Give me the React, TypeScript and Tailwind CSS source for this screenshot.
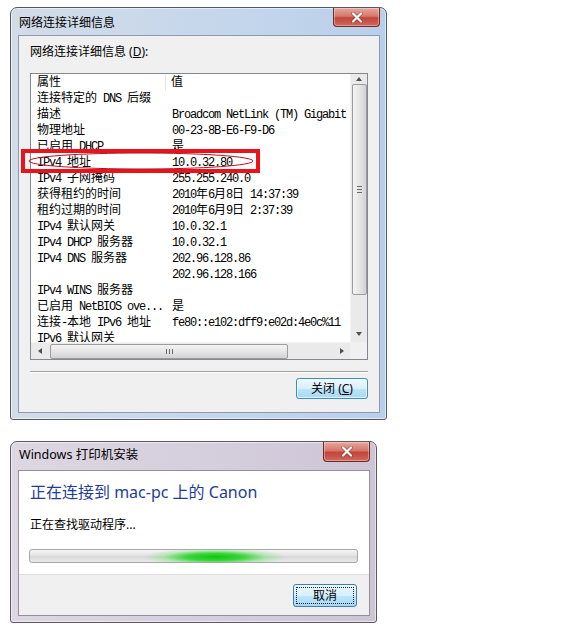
import React from "react";

const rows: [string, string][] = [
  ["连接特定的 DNS 后缀", ""],
  ["描述", "Broadcom NetLink (TM) Gigabit"],
  ["物理地址", "00-23-8B-E6-F9-D6"],
  ["已启用 DHCP", "是"],
  ["IPv4 地址", "10.0.32.80"],
  ["IPv4 子网掩码", "255.255.240.0"],
  ["获得租约的时间", "2010年6月8日 14:37:39"],
  ["租约过期的时间", "2010年6月9日 2:37:39"],
  ["IPv4 默认网关", "10.0.32.1"],
  ["IPv4 DHCP 服务器", "10.0.32.1"],
  ["IPv4 DNS 服务器", "202.96.128.86"],
  ["", "202.96.128.166"],
  ["IPv4 WINS 服务器", ""],
  ["已启用 NetBIOS ove...", "是"],
  ["连接-本地 IPv6 地址", "fe80::e102:dff9:e02d:4e0c%11"],
  ["IPv6 默认网关", ""],
];

function Mixed({ text }: { text: string }) {
  const parts = text.split(/([\x20-\x7e]+)/).filter((p) => p.length > 0);
  return (
    <>
      {parts.map((p, i) =>
        /^[\x20-\x7e]+$/.test(p) ? (
          <span
            key={i}
            className="font-['Liberation_Mono',monospace] text-[12px] tracking-[-1.2px] whitespace-pre"
          >
            {p}
          </span>
        ) : (
          <span key={i}>{p}</span>
        )
      )}
    </>
  );
}

function CloseBtn({ w, h }: { w: string; h: string }) {
  return (
    <div
      className={`${w} ${h} rounded-b-[4px] border border-t-0 border-[#6e2a25] bg-[linear-gradient(to_bottom,#e9a79d_0%,#d7776b_45%,#c2453a_55%,#d0685c_100%)] flex items-center justify-center shadow-[inset_0_0_0_1px_rgba(255,255,255,0.35)]`}
    >
      <svg width="14" height="11" viewBox="0 0 14 11">
        <path d="M3 1.5 L11 9.5 M11 1.5 L3 9.5" stroke="#5b1d18" strokeWidth="3.6" strokeLinecap="round" opacity="0.45" />
        <path d="M3 1.5 L11 9.5 M11 1.5 L3 9.5" stroke="#ffffff" strokeWidth="2.2" strokeLinecap="round" />
      </svg>
    </div>
  );
}

function UpArrow() {
  return <div className="w-0 h-0 border-x-[3.5px] border-x-transparent border-b-[4px] border-b-[#505050]" />;
}
function DownArrow() {
  return <div className="w-0 h-0 border-x-[3.5px] border-x-transparent border-t-[4px] border-t-[#505050]" />;
}
function LeftArrow() {
  return <div className="w-0 h-0 border-y-[3.5px] border-y-transparent border-r-[4px] border-r-[#505050]" />;
}
function RightArrow() {
  return <div className="w-0 h-0 border-y-[3.5px] border-y-transparent border-l-[4px] border-l-[#505050]" />;
}

function NetworkDialog() {
  return (
    <div className="w-[377px] h-[413px] border border-[#4f5a68] rounded-t-[7px] rounded-b-[3px] bg-[linear-gradient(to_right,#d3dce7,#c4d6ec_60%,#b9cfe9)] shadow-[inset_0_0_0_1px_rgba(255,255,255,0.55)] flex flex-col">
      <div className="h-[27px] flex items-start justify-between pl-[8px] pr-[6px]">
        <div className="pt-[7px] text-[12px] leading-[16px] text-black">网络连接详细信息</div>
        <CloseBtn w="w-[47px]" h="h-[19px]" />
      </div>
      <div className="ml-[7px] w-[362px] h-[378px] border border-[#8a9cb4] bg-[#f0f0f0] flex flex-col px-[11px]">
        <div className="pt-[8px] text-[12px] leading-[16px] text-black">
          网络连接详细信息 (<span className="underline">D</span>):
        </div>
        <div className="relative mt-[13px] w-[338px] h-[287px] shrink-0">
          <div className="w-full h-full border border-[#828790] bg-white flex flex-col">
            <div className="flex h-[268px]">
              <div className="w-[319px] h-full overflow-hidden flex flex-col">
                <div className="h-[16px] shrink-0 flex text-[12px] leading-[16px] text-black">
                  <div className="w-[135px] pl-[6px] border-r border-[#e3e6ea]">属性</div>
                  <div className="pl-[5px]">值</div>
                </div>
                {rows.map(([k, v], i) => (
                  <div key={i} className="h-[16px] shrink-0 flex text-[12px] leading-[16px] text-black whitespace-nowrap">
                    <div className="w-[135px] shrink-0 pl-[6px]">
                      <Mixed text={k} />
                    </div>
                    <div className="pl-[6px]">
                      <Mixed text={v} />
                    </div>
                  </div>
                ))}
              </div>
              <div className="w-[17px] h-full bg-[#eaeaea] border-l border-[#f4f4f4] flex flex-col items-center">
                <div className="h-[10px] flex items-center justify-center">
                  <UpArrow />
                </div>
                <div className="w-[15px] h-[211px] rounded-[2px] border border-[#9c9c9c] bg-[linear-gradient(to_right,#f4f4f4,#e6e6e6_50%,#d2d2d2)] flex flex-col items-center justify-center gap-[2px]">
                  <div className="w-[5px] h-px bg-[#6a6a6a]" />
                  <div className="w-[5px] h-px bg-[#6a6a6a]" />
                  <div className="w-[5px] h-px bg-[#6a6a6a]" />
                </div>
                <div className="flex-1" />
                <div className="h-[17px] flex items-center justify-center">
                  <DownArrow />
                </div>
              </div>
            </div>
            <div className="flex h-[17px]">
              <div className="w-[319px] h-full bg-[#eaeaea] border-t border-[#f4f4f4] flex items-center">
                <div className="w-[17px] flex items-center justify-center">
                  <LeftArrow />
                </div>
                <div className="ml-[2px] w-[238px] h-[15px] rounded-[2px] border border-[#9c9c9c] bg-[linear-gradient(to_bottom,#f4f4f4,#e6e6e6_50%,#d2d2d2)] flex items-center justify-center gap-[2px]">
                  <div className="w-px h-[5px] bg-[#6a6a6a]" />
                  <div className="w-px h-[5px] bg-[#6a6a6a]" />
                  <div className="w-px h-[5px] bg-[#6a6a6a]" />
                </div>
                <div className="flex-1" />
                <div className="w-[17px] flex items-center justify-center">
                  <RightArrow />
                </div>
              </div>
              <div className="w-[17px] h-full bg-[#f0f0f0]" />
            </div>
          </div>
          <div className="absolute left-[-9px] top-[76px] w-[239px] h-[24px] border-[4px] border-[#e8141c]" />
          <svg className="absolute left-[-3px] top-[77px]" width="228" height="21" viewBox="0 0 228 21">
            <ellipse cx="114" cy="11" rx="112" ry="8" fill="none" stroke="#b8121f" strokeWidth="1" />
          </svg>
        </div>
        <div className="mt-[11px] h-px bg-[#a0a0a0]" />
        <div className="h-px bg-white" />
        <div className="mt-[5px] flex justify-end">
          <div className="w-[72px] h-[21px] rounded-[3px] border border-[#3c8fc4] bg-[linear-gradient(to_bottom,#eef8fe_0%,#d9effc_50%,#bde4f8_51%,#a7d9f5_100%)] shadow-[inset_0_0_0_1px_rgba(255,255,255,0.7)] flex items-center justify-center text-[12px] leading-[16px] text-black">
            关闭 (<span className="underline">C</span>)
          </div>
        </div>
      </div>
    </div>
  );
}

function PrinterDialog() {
  return (
    <div className="w-[367px] h-[182px] border border-[#5c5564] rounded-t-[7px] rounded-b-[3px] bg-[linear-gradient(to_right,#ddd7e2,#d4cddc_60%,#cdc5d6)] shadow-[inset_0_0_0_1px_rgba(255,255,255,0.55)] flex flex-col">
      <div className="h-[28px] flex items-start justify-between pl-[8px] pr-[6px]">
        <div className="pt-[5px] text-[12.5px] leading-[16px] text-black">Windows 打印机安装</div>
        <CloseBtn w="w-[47px]" h="h-[20px]" />
      </div>
      <div className="ml-[7px] w-[352px] h-[146px] border border-[#958da0] flex flex-col">
        <div className="h-[103px] bg-white pl-[11px] pt-[10px] flex flex-col">
          <div className="text-[16px] leading-[22px] text-[#1f3d96]">正在连接到 mac-pc 上的 Canon</div>
          <div className="mt-[14px] text-[12px] leading-[16px] text-black">正在查找驱动程序...</div>
          <div className="relative mt-[16px] ml-[-1px] w-[329px] h-[14px] rounded-[3px] border border-[#a8a8a8] bg-[linear-gradient(to_bottom,#f4f4f4,#e4e4e4_45%,#d8d8d8_55%,#eaeaea)] overflow-hidden">
            <div className="absolute left-[115px] top-[-2px] w-[140px] h-[18px] bg-[radial-gradient(ellipse_at_center,#0cc80c_0%,rgba(30,210,30,0.85)_28%,rgba(110,230,110,0.4)_52%,rgba(255,255,255,0)_72%)]" />
          </div>
        </div>
        <div className="flex-1 border-t border-[#dfdfdf] bg-[#f0f0f0] pt-[9px] pr-[12px] flex justify-end items-start">
          <div className="w-[64px] h-[23px] rounded-[3px] border border-[#3c7fb1] bg-[linear-gradient(to_bottom,#eaf6fd_0%,#d9f0fc_50%,#bee6fd_51%,#a7d9f5_100%)] p-[2px]">
            <div className="w-full h-full border border-dotted border-[#222] flex items-center justify-center text-[12px] leading-[16px] text-black">
              取消
            </div>
          </div>
        </div>
      </div>
    </div>
  );
}

export default function App() {
  return (
    <div className="w-[579px] h-[639px] bg-white overflow-hidden font-['Noto_Sans','Noto_Sans_CJK_SC',sans-serif]">
      <div className="pt-[7px] pl-[10px]">
        <NetworkDialog />
      </div>
      <div className="mt-[21px] pl-[10px]">
        <PrinterDialog />
      </div>
    </div>
  );
}
